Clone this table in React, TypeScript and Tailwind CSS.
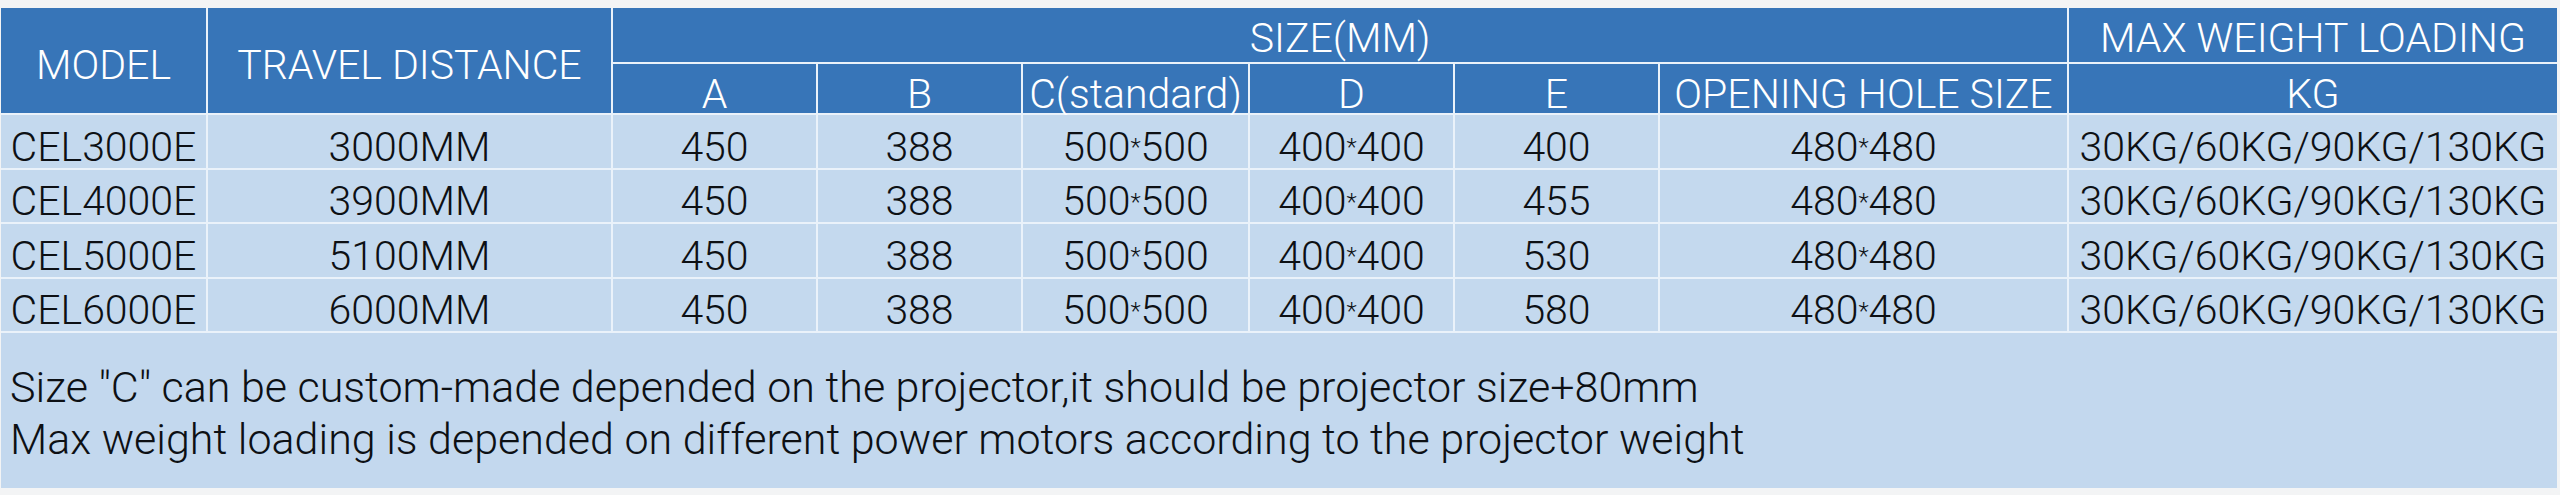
import React from 'react';

const rows = [
  ['CEL3000E', '3000MM', '450', '388', '500*500', '400*400', '400', '480*480', '30KG/60KG/90KG/130KG'],
  ['CEL4000E', '3900MM', '450', '388', '500*500', '400*400', '455', '480*480', '30KG/60KG/90KG/130KG'],
  ['CEL5000E', '5100MM', '450', '388', '500*500', '400*400', '530', '480*480', '30KG/60KG/90KG/130KG'],
  ['CEL6000E', '6000MM', '450', '388', '500*500', '400*400', '580', '480*480', '30KG/60KG/90KG/130KG'],
];

const subHeads = ['A', 'B', 'C(standard)', 'D', 'E', 'OPENING HOLE SIZE', 'KG'];

// renders "500*500" with the small centred star of the original
const Value = ({ text }: { text: string }) => {
  const parts = text.split('*');
  if (parts.length < 2) return <>{text}</>;
  return (
    <>
      {parts[0]}
      <span className="text-[24px] align-middle">*</span>
      {parts[1]}
    </>
  );
};

const head = 'flex items-center justify-center bg-[#3775b8] text-white whitespace-nowrap';

export default function App() {
  return (
    <div className="w-[2560px] h-[495px] bg-[#f3f4f5] pt-[8px] pl-[1px] font-['Roboto','Liberation_Sans',sans-serif] leading-none">
      <div className="grid w-[2556px] grid-cols-[205px_403px_203px_203px_225px_203px_203px_407px_488px] grid-rows-[54px_49px_53px_52px_53px_52px_155px] gap-[2px] bg-[#eaf2fa] text-[41px] font-light">
        {/* header */}
        <div className={`${head} row-span-2 pt-[10px]`}>MODEL</div>
        <div className={`${head} row-span-2 pt-[10px]`}>TRAVEL DISTANCE</div>
        <div className={`${head} col-span-6 pt-[6px]`}>SIZE(MM)</div>
        <div className={`${head} pt-[6px]`}>MAX WEIGHT LOADING</div>
        {subHeads.map((h) => (
          <div key={h} className={`${head} pt-[12px]`}>
            {h}
          </div>
        ))}

        {/* data rows */}
        {rows.map((row) =>
          row.map((cell, i) => (
            <div
              key={row[0] + i}
              className="flex items-center justify-center bg-[#c4d9ee] pt-[11px] text-[#0d1014] whitespace-nowrap"
            >
              <Value text={cell} />
            </div>
          ))
        )}

        {/* notes */}
        <div className="col-span-9 flex flex-col justify-center bg-[#c3d8ee] pl-[9px] pt-[4px] text-[43px] leading-[52px] text-[#0d1014]">
          <p>Size "C" can be custom-made depended on the projector,it should be projector size+80mm</p>
          <p>Max weight loading is depended on different power motors according to the projector weight</p>
        </div>
      </div>
    </div>
  );
}
